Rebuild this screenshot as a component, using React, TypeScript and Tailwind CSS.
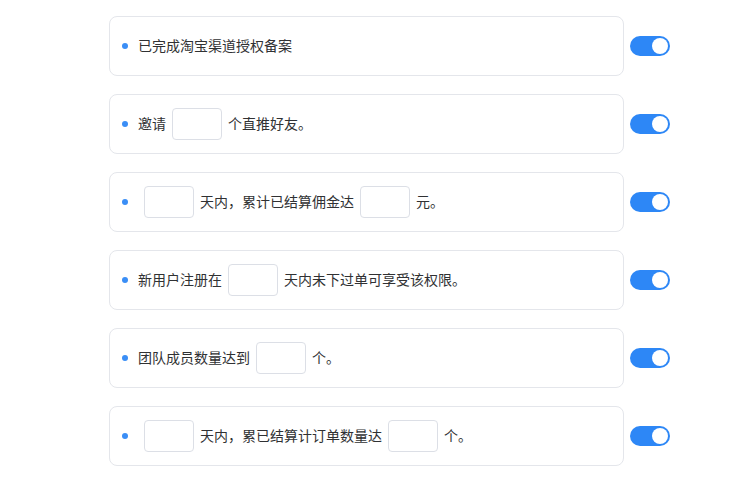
import React, { useState } from 'react';

type Part = string | { input: true };

interface Rule {
  id: number;
  parts: Part[];
}

const I: Part = { input: true };

const rules: Rule[] = [
  { id: 1, parts: ['已完成淘宝渠道授权备案'] },
  { id: 2, parts: ['邀请', I, '个直推好友。'] },
  { id: 3, parts: ['', I, '天内，累计已结算佣金达', I, '元。'] },
  { id: 4, parts: ['新用户注册在', I, '天内未下过单可享受该权限。'] },
  { id: 5, parts: ['团队成员数量达到', I, '个。'] },
  { id: 6, parts: ['', I, '天内，累已结算计订单数量达', I, '个。'] },
];

function Toggle({ on, onChange }: { on: boolean; onChange: () => void }) {
  return (
    <button
      onClick={onChange}
      className={`relative h-5 w-10 shrink-0 rounded-full transition-colors ${on ? 'bg-[#2d87f6]' : 'bg-[#dcdfe6]'}`}
    >
      <span
        className={`absolute top-[2px] h-4 w-4 rounded-full bg-white transition-all ${on ? 'left-[22px]' : 'left-[2px]'}`}
      />
    </button>
  );
}

export default function App() {
  const [enabled, setEnabled] = useState<Record<number, boolean>>({
    1: true, 2: true, 3: true, 4: true, 5: true, 6: true,
  });

  return (
    <div
      className="min-h-[482px] w-[756px] bg-white pl-[109px] pt-4 text-[14px] text-[#303133]"
      style={{ fontFamily: '"Noto Sans CJK SC", "Noto Sans", sans-serif' }}
    >
      <div className="flex flex-col gap-[18px]">
        {rules.map((rule) => (
          <div key={rule.id} className="flex items-center gap-1.5">
            <div className="flex h-[60px] w-[515px] items-center rounded-lg border border-[#e4e6eb] pl-3">
              <span className="mr-2.5 h-1.5 w-1.5 shrink-0 rounded-full bg-[#3a8ef6]" />
              {rule.parts.map((p, i) =>
                typeof p === 'string' ? (
                  <span key={i} className="mb-0.5 leading-5">{p}</span>
                ) : (
                  <input
                    key={i}
                    className="mx-1.5 h-8 w-[50px] rounded border border-[#dcdfe6] bg-white px-2 outline-none"
                  />
                )
              )}
            </div>
            <Toggle
              on={enabled[rule.id]}
              onChange={() => setEnabled({ ...enabled, [rule.id]: !enabled[rule.id] })}
            />
          </div>
        ))}
      </div>
    </div>
  );
}
